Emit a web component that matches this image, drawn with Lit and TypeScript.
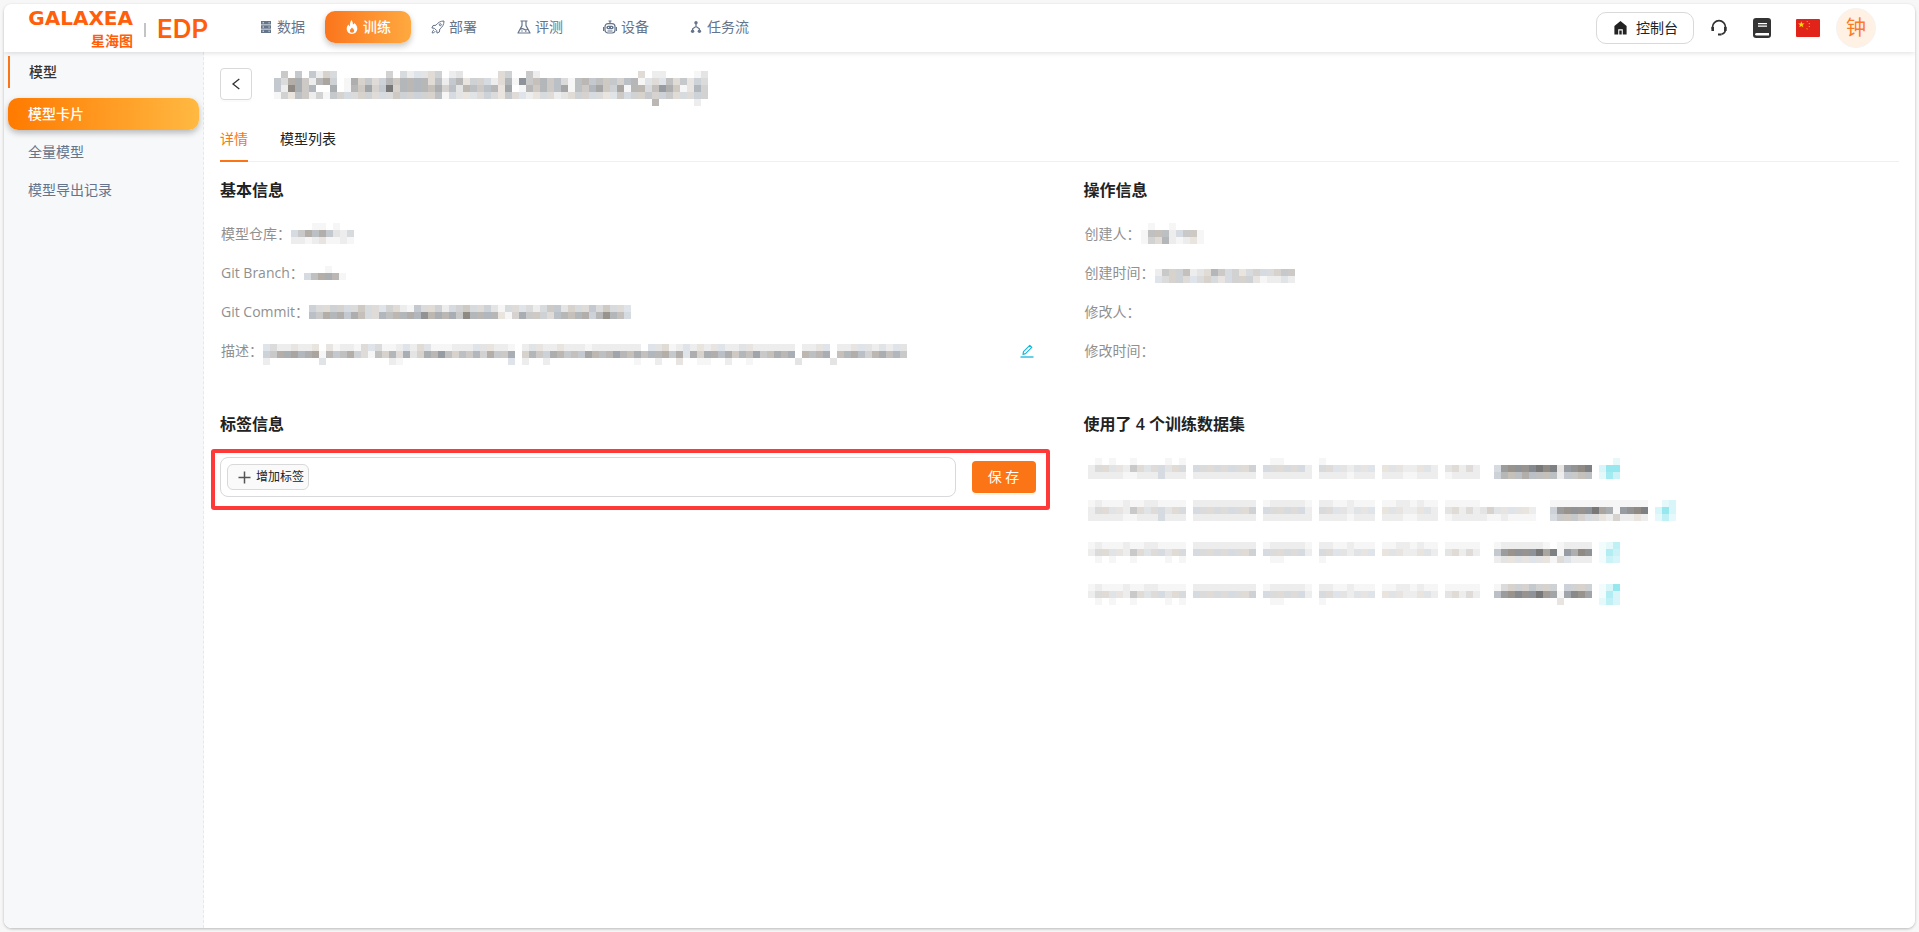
import { LitElement, html, svg, css } from "lit";
import { customElement, property, state } from "lit/decorators.js";

const CELL = 7;

/* Redacted values: one string per row, one hex digit per cell, "." for an empty cell. */
const TITLE = [
  ".6.6.6254.......5.423345.23.....45..62..............4.22....13",
  "6499628a5.1956458688884726835542481" + "c67867417867665781343746" + "354",
  "62d968..9.186a56f588887957387678" + "3a.186867a1768a65a18847b96138",
  "1537625165445544465555571433345436432344234554433645565564445",
  "......................................................8.....2.",
].map((row) => row.padEnd(62, "5"));
const REPO = ["...11.1..", "469796324", "221231121"];
const BRANCH = ["...1..", "479981"];
const COMMIT = [
  "5445544644354216445245644531443424663544646443",
  "7698969744878898c89896d8888315966547878958c874",
];
const DESCRIPTION = [
  "",
  "34223223.312214341123243111222333221.23322322212222222.334123232332233222222.2233.22333232332.",
  "5699a89a18679541758493598b7576859669.586598676a878a8797889693959979687a67989.8789.78975897862322",
  "2.......3.........21...............3.2..2............1..2..3..11..2..1......3....3..........",
].map((row) => row.slice(0, 92));
const CREATOR = [".1..1....", "177724661", "154821231"];
const CREATED = ["", "26557234864534544566", "34554345434555312232"];
const PATH_TOP = ".1.1..1....1.1............11.....1......................";
const PATH_MID = "24433264344344.444444445.4444442.44332333.33322332.34242";
const PATH_LOW = "22222112224222.222222222.2222222.22221222.22211222.12222";
const PATH_ALT = "12111211221111.222222222.1222221.22112111.11221211.11111";
const NAME_DARK = "4bcccdfde3bcde";

interface Dataset {
  path: string[];
  name: string[];
  link: string[];
}
const DATASETS: Dataset[] = [
  { path: [PATH_TOP, PATH_MID, PATH_LOW], name: ["", NAME_DARK, "58779777726677"], link: ["..2", "388", "274"] },
  {
    path: [PATH_ALT, PATH_MID + "35333332", PATH_LOW + "21121111"],
    name: ["11111111111111", "5bccccfa91bcde", "46665443252232"],
    link: [".23", "383", "252"],
  },
  { path: [PATH_ALT, PATH_MID, PATH_TOP], name: ["12222221.12222", "6bccccfae1b9dc", "23333333143222"], link: ["125", "164", "143"] },
  { path: [PATH_ALT, PATH_MID, PATH_TOP], name: ["145556555.5555", "7bcdccfba1adca", ".........3...."], link: ["138", "163", "253"] },
];

const mosaic = (rows: string[], tone: "grey" | "cyan" = "grey") => {
  const cols = Math.max(...rows.map((r) => r.length));
  const cells = rows.flatMap((row, y) =>
    [...row].map((ch, x) => {
      if (ch === ".") return null;
      const d = parseInt(ch, 16);
      const g = 255 - d * 9;
      const tint = d > 2 ? (((x * 7 + y * 5) % 5) - 2) * 3 : 0;
      const fill =
        tone === "cyan" ? `rgb(${255 - d * 13},${255 - d * 3},${255 - d * 2})` : `rgb(${g + tint},${g},${g - tint})`;
      return svg`<rect x=${x * CELL} y=${y * CELL} width=${CELL} height=${CELL} fill=${fill}></rect>`;
    }),
  );
  return html`<svg
    class="mosaic"
    aria-hidden="true"
    shape-rendering="crispEdges"
    width=${cols * CELL}
    height=${rows.length * CELL}
  >
    ${cells}
  </svg>`;
};

const icons = {
  data: svg`<path fill="currentColor" d="M2 1h10v3.6H2zM2 5.2h10v3.6H2zM2 9.400h10V13H2z"/><path stroke="#fff" stroke-width=".9" d="M3.500 2.800h1.500M9.500 2.800h1.200M3.500 7h1.500M9.500 7h1.200M3.500 11.200h1.500M9.500 11.200h1.200"/>`,
  fire: svg`<path fill="currentColor" fill-rule="evenodd" d="M6.400 0C7.600 1.700 8 3 7.900 4.500 8.700 4.300 9.200 3.700 9.400 2.900 11.300 4.500 12.300 6.500 12.300 8.600 12.300 11.800 10 14 7 14S1.700 11.800 1.700 8.800C1.700 6.900 2.500 5.700 3.700 4.600 3.900 5.600 4.200 6.100 4.900 6.500 4.700 4 5.200 1.800 6.400 0zM7 7.500C6.300 8.700 4.900 9.300 4.900 10.800 4.900 12 5.800 12.700 7 12.700S9.200 12 9.200 10.800C9.200 9.300 7.700 8.700 7 7.500z"/>`,
  rocket: svg`<g fill="none" stroke="currentColor" stroke-linejoin="round"><path d="M13 1C9.500 1 7 2.500 5 5.200L2 5.600 .9 8l2.500.3 2.300 2.300.3 2.500 2.400-1.100.4-3C11.500 7 13 4.500 13 1z"/><circle cx="9.300" cy="4.700" r="1"/><path d="M3 10c-1.300.4-1.700 1.700-1.800 3 1.300-.1 2.500-.6 3-1.800"/></g>`,
  flask: svg`<g fill="none" stroke="currentColor" stroke-width="1.200" stroke-linejoin="round"><path d="M3.500 1h7M5 1v4.600L1 13h12L9 5.600V1M3.300 9.200c1.500-1 2.700-.8 3.700 0s2.200.9 3.700 0"/></g><circle cx="5" cy="11" r=".7" fill="currentColor"/><circle cx="8.800" cy="11.200" r=".7" fill="currentColor"/>`,
  robot: svg`<g fill="none" stroke="currentColor" stroke-width="1.200"><path d="M7 1v3M5.500 1h3"/><rect x="2" y="3.600" width="10" height="9.400" rx="3"/><path d="M.6 7v4M13.400 7v4M4.500 11h5"/></g><rect x="3.400" y="5.800" width="7.200" height="3.400" rx="1.700" fill="currentColor"/><path stroke="#fff" d="M5 7.500h1M8 7.500h1"/>`,
  flow: svg`<g fill="currentColor"><circle cx="7" cy="2.800" r="1.700"/><circle cx="3.600" cy="11.300" r="1.700"/><circle cx="10.400" cy="11.300" r="1.700"/></g><path fill="none" stroke="currentColor" stroke-width="1.200" d="M7 4v3M3.600 10V8.800L7 6.500l3.400 2.300V10"/>`,
};
const NAV: { label: string; icon: keyof typeof icons }[] = [
  { label: "数据", icon: "data" },
  { label: "训练", icon: "fire" },
  { label: "部署", icon: "rocket" },
  { label: "评测", icon: "flask" },
  { label: "设备", icon: "robot" },
  { label: "任务流", icon: "flow" },
];

const base = css`
  * {
    box-sizing: border-box;
  }
  a {
    color: inherit;
    text-decoration: none;
  }
  button {
    font: inherit;
    color: inherit;
    margin: 0;
    padding: 0;
    border: 0;
    background: none;
    cursor: pointer;
  }
  svg {
    display: block;
    flex: none;
  }
`;

@customElement("top-bar")
class TopBar extends LitElement {
  @property() active = "训练";

  static styles = [
    base,
    css`
      :host {
        display: block;
      }
      .bar {
        display: flex;
        align-items: center;
        height: 48px;
        padding: 0 39px 0 24px;
      }
      .brand {
        display: flex;
        align-items: center;
        width: 211px;
        color: #ff5f0a;
      }
      .names {
        display: grid;
        justify-items: end;
        width: 105px;
      }
      .latin {
        font: 700 20px/23px "DejaVu Sans", sans-serif;
      }
      .cjk {
        font: 700 14px/20px "Noto Sans CJK SC", sans-serif;
      }
      .rule {
        width: 2px;
        height: 14px;
        margin: 4px 11px 0 11px;
        background: #c4c4c4;
      }
      .product {
        margin-top: 2px;
        font: 600 26px/24px Inter, sans-serif;
      }
      nav {
        display: flex;
        flex: 1;
        padding-bottom: 2px;
      }
      .item {
        display: flex;
        align-items: center;
        gap: 4px;
        height: 32px;
        padding: 0 20px;
        border-radius: 10px;
        color: #64748b;
        white-space: nowrap;
      }
      .on {
        color: #fff;
        font-weight: 500;
        background: linear-gradient(90deg, #fb751c, #ffa940);
        box-shadow: 0 3px 6px rgba(0, 0, 0, 0.24);
      }
      .tools {
        display: flex;
        align-items: center;
      }
      .console {
        display: flex;
        align-items: center;
        gap: 8px;
        height: 32px;
        margin-right: 16px;
        padding: 0 15px 0 16px;
        border: 1px solid #d9d9d9;
        border-radius: 10px;
        color: #222;
      }
      .help {
        margin-right: 24px;
      }
      .docs {
        margin-right: 24px;
      }
      .flag {
        margin-right: 16px;
      }
      .avatar {
        width: 40px;
        height: 40px;
        border: 1px solid #f3f3f3;
        border-radius: 50%;
        background: #fff1e3;
        color: #fb7a24;
        font-size: 20px;
        line-height: 38px;
      }
    `,
  ];

  render() {
    return html`<header class="bar">
      <a class="brand" href="#">
        <span class="names"><span class="latin">GALAXEA</span><span class="cjk">星海图</span></span>
        <span class="rule"></span>
        <span class="product">EDP</span>
      </a>
      <nav>
        ${NAV.map(
          (n) => html`<a class="item ${n.label === this.active ? "on" : ""}" href="#">
            <svg width="14" height="14" viewBox="0 0 14 14">${icons[n.icon]}</svg>${n.label}
          </a>`,
        )}
      </nav>
      <div class="tools">
        <button class="console">
          <svg width="15" height="16" viewBox="0 0 15 16">
            <path fill="#222" d="M7.500 1 13.600 6v8.400H9.800V9.200H5.200v5.200H1.400V6z" />
            <path fill="#222" d="M6.300 10.500h2.400v4H6.300z" />
          </svg>
          控制台
        </button>
        <button class="help" aria-label="客服">
          <svg width="18" height="18" viewBox="0 0 18 18" fill="none" stroke="#333" stroke-width="1.700">
            <path d="M2.500 10V8.200a6.500 6.500 0 0 1 13 0V10a5.500 5.500 0 0 1-4 5.300" />
            <path stroke-width="2.600" d="M2.700 8v4M15.300 8v4" />
            <path stroke-width="2.200" d="M8 15.500h3.500" />
          </svg>
        </button>
        <button class="docs" aria-label="文档">
          <svg width="20" height="20" viewBox="0 0 20 20">
            <path fill="#333" d="M4 0h12q3 0 3 3v14q0 3-3 3H4q-3 0-3-3V3q0-3 3-3z" />
            <path stroke="#fff" stroke-width="1.200" d="M6 5.600h9M6 8.200h9" />
            <path fill="#fff" d="M4.500 15H17v2.600H4.500a1.300 1.300 0 0 1 0-2.600z" />
          </svg>
        </button>
        <button class="flag" aria-label="中文">
          <svg width="24" height="18" viewBox="0 0 24 18">
            <rect width="24" height="18" rx="1" fill="#e2231a" />
            <path
              fill="#ffde00"
              d="m5.300 2.300.8 2.300h2.400L6.600 6l.7 2.300-2-1.400-2 1.400L4 6 2.100 4.600h2.400zM10.400 2.300l1.200-.3.100 1.300zM12.500 4.300l1.300-.2-.2 1.300zM12.500 7.200l1.300-.2-.2 1.300zM10.200 9.600l1.400-.2-.4 1.300z"
            />
          </svg>
        </button>
        <button class="avatar">钟</button>
      </div>
    </header>`;
  }
}

@customElement("side-menu")
class SideMenu extends LitElement {
  @property() active = "模型卡片";

  static styles = [
    base,
    css`
      :host {
        display: block;
      }
      nav {
        display: grid;
        gap: 6px;
        padding: 4px;
      }
      .group {
        height: 32px;
        margin-bottom: 4px;
        padding-left: 19px;
        border-left: 2px solid #fb7516;
        font-weight: 500;
        line-height: 32px;
        color: #333;
      }
      .item {
        height: 32px;
        padding-left: 20px;
        border-radius: 10px;
        line-height: 32px;
        color: #64748b;
      }
      .on {
        color: #fff;
        font-weight: 500;
        background: linear-gradient(90deg, #ff7a00, #ffb942);
        box-shadow: 0 3px 6px rgba(0, 0, 0, 0.26);
      }
    `,
  ];

  render() {
    return html`<nav>
      <div class="group">模型</div>
      ${["模型卡片", "全量模型", "模型导出记录"].map(
        (t) => html`<a class="item ${t === this.active ? "on" : ""}" href="#">${t}</a>`,
      )}
    </nav>`;
  }
}

@customElement("app-root")
class AppRoot extends LitElement {
  @state() tab = "详情";

  static styles = [
    base,
    css`
      :host {
        display: flex;
        box-sizing: border-box;
        min-height: 100vh;
        padding: 4px;
        background: #f7f7f7;
        color: #222;
        font: 14px/22px "Open Sans", "Noto Sans CJK SC", sans-serif;
      }
      .shell {
        display: flex;
        flex: 1;
        flex-direction: column;
        min-width: 0;
        overflow: hidden;
        border-radius: 8px;
        background: #fff;
      }
      .frame {
        display: flex;
        flex: 1;
        min-width: 0;
        border-radius: 8px;
        box-shadow: 0 1px 3px rgba(0, 0, 0, 0.26);
      }
      top-bar {
        position: relative;
        background: #fff;
        box-shadow: 0 1px 5px rgba(0, 0, 0, 0.13);
      }
      .body {
        display: flex;
        flex: 1;
      }
      side-menu {
        flex: none;
        width: 200px;
        border-right: 1px dashed #e6e8ea;
        background: #f7f8fa;
      }
      main {
        flex: 1;
        min-width: 0;
        padding: 16px;
      }
      .head {
        display: flex;
        align-items: flex-start;
        gap: 22px;
        height: 32px;
      }
      .back {
        display: grid;
        place-items: center;
        width: 32px;
        height: 32px;
        border: 1px solid #d9d9d9;
        border-radius: 4px;
        box-shadow: 0 2px 0 rgba(0, 0, 0, 0.02);
      }
      h1,
      h2,
      dl,
      dd,
      ul {
        margin: 0;
        padding: 0;
      }
      h1 {
        padding-top: 3px;
      }
      .tabs {
        display: flex;
        gap: 32px;
        margin-top: 16px;
        border-bottom: 1px solid #f0f0f0;
      }
      .tab {
        height: 46px;
        margin-bottom: -1px;
        padding-top: 2px;
        border-bottom: 2px solid transparent;
      }
      .current {
        border-color: #fb7516;
        color: #fb7516;
      }
      .columns {
        display: grid;
        grid-template-columns: 1fr 1fr;
        gap: 42px 48px;
        margin-top: 16px;
      }
      h2 {
        font-size: 16px;
        font-weight: 600;
        line-height: 24px;
      }
      dl {
        margin-top: 12px;
      }
      .row {
        display: flex;
        align-items: center;
        height: 39px;
        padding-left: 1px;
      }
      dt {
        color: #909090;
        white-space: nowrap;
      }
      .edit {
        margin-left: auto;
        margin-right: 2px;
      }
      .tagline {
        position: relative;
        display: flex;
        align-items: center;
        gap: 16px;
        margin-top: 21px;
      }
      .highlight {
        position: absolute;
        inset: -8px -14px -13px -9px;
        border: 4px solid #ff3838;
        border-radius: 3px;
        pointer-events: none;
      }
      .tags {
        flex: 1;
        height: 40px;
        padding: 6px;
        border: 1px solid #d9d9d9;
        border-radius: 8px;
      }
      .add {
        display: flex;
        align-items: center;
        gap: 5px;
        height: 26px;
        padding: 0 4px 0 10px;
        border: 1px solid #d9d9d9;
        border-radius: 6px;
        background: #fafafa;
        font-size: 12px;
        line-height: 20px;
      }
      .save {
        width: 64px;
        height: 32px;
        border-radius: 4px;
        background: #fb7516;
        box-shadow: 0 2px 0 #fff5e6;
        color: #fff;
      }
      ul {
        margin-top: 11px;
        list-style: none;
      }
      .set {
        display: flex;
        align-items: center;
        height: 42px;
        padding-left: 4px;
      }
      .set-name {
        margin: 0 7px 0 14px;
      }
    `,
  ];

  private row(label: string, value: unknown = null, extra: unknown = null) {
    return html`<div class="row"><dt>${label}</dt><dd>${value}</dd>${extra}</div>`;
  }

  render() {
    return html`<div class="frame">
      <div class="shell">
        <top-bar></top-bar>
        <div class="body">
          <side-menu></side-menu>
          <main>
            <div class="head">
              <button class="back" aria-label="返回">
                <svg width="12" height="12" viewBox="0 0 12 12" fill="none" stroke="#333" stroke-width="1.300">
                  <path d="M9.300 1 3 6l6.300 5" />
                </svg>
              </button>
              <h1>${mosaic(TITLE)}</h1>
            </div>
            <div class="tabs" role="tablist">
              ${["详情", "模型列表"].map(
                (t) => html`<button
                  role="tab"
                  aria-selected=${t === this.tab}
                  class="tab ${t === this.tab ? "current" : ""}"
                  @click=${() => (this.tab = t)}
                >
                  ${t}
                </button>`,
              )}
            </div>
            <div class="columns">
              <section>
                <h2>基本信息</h2>
                <dl>
                  ${this.row("模型仓库：", mosaic(REPO))} ${this.row("Git Branch：", mosaic(BRANCH))}
                  ${this.row("Git Commit：", mosaic(COMMIT))}
                  ${this.row(
                    "描述：",
                    mosaic(DESCRIPTION),
                    html`<button class="edit" aria-label="编辑">
                      <svg width="14" height="14" viewBox="0 0 14 14" fill="none" stroke="#13b9d8">
                        <path stroke-width="1.300" d="M.5 13h13" />
                        <path stroke-width="1.200" stroke-linejoin="round" d="m3 10.300.5-2.600L9.800 1.400l2 2L5.500 9.700z" />
                      </svg>
                    </button>`,
                  )}
                </dl>
              </section>
              <section>
                <h2>操作信息</h2>
                <dl>
                  ${this.row("创建人：", mosaic(CREATOR))} ${this.row("创建时间：", mosaic(CREATED))}
                  ${this.row("修改人：")} ${this.row("修改时间：")}
                </dl>
              </section>
              <section>
                <h2>标签信息</h2>
                <div class="tagline">
                  <div class="tags">
                    <button class="add">
                      <svg width="13" height="13" viewBox="0 0 13 13" stroke="#555" stroke-width="1.500">
                        <path d="M6.500.5v12M.5 6.500h12" />
                      </svg>
                      增加标签
                    </button>
                  </div>
                  <button class="save">保 存</button>
                  <div class="highlight"></div>
                </div>
              </section>
              <section>
                <h2>使用了 4 个训练数据集</h2>
                <ul>
                  ${DATASETS.map(
                    (d) => html`<li class="set">
                      ${mosaic(d.path)}<span class="set-name">${mosaic(d.name)}</span>${mosaic(d.link, "cyan")}
                    </li>`,
                  )}
                </ul>
              </section>
            </div>
          </main>
        </div>
      </div>
    </div>`;
  }
}
